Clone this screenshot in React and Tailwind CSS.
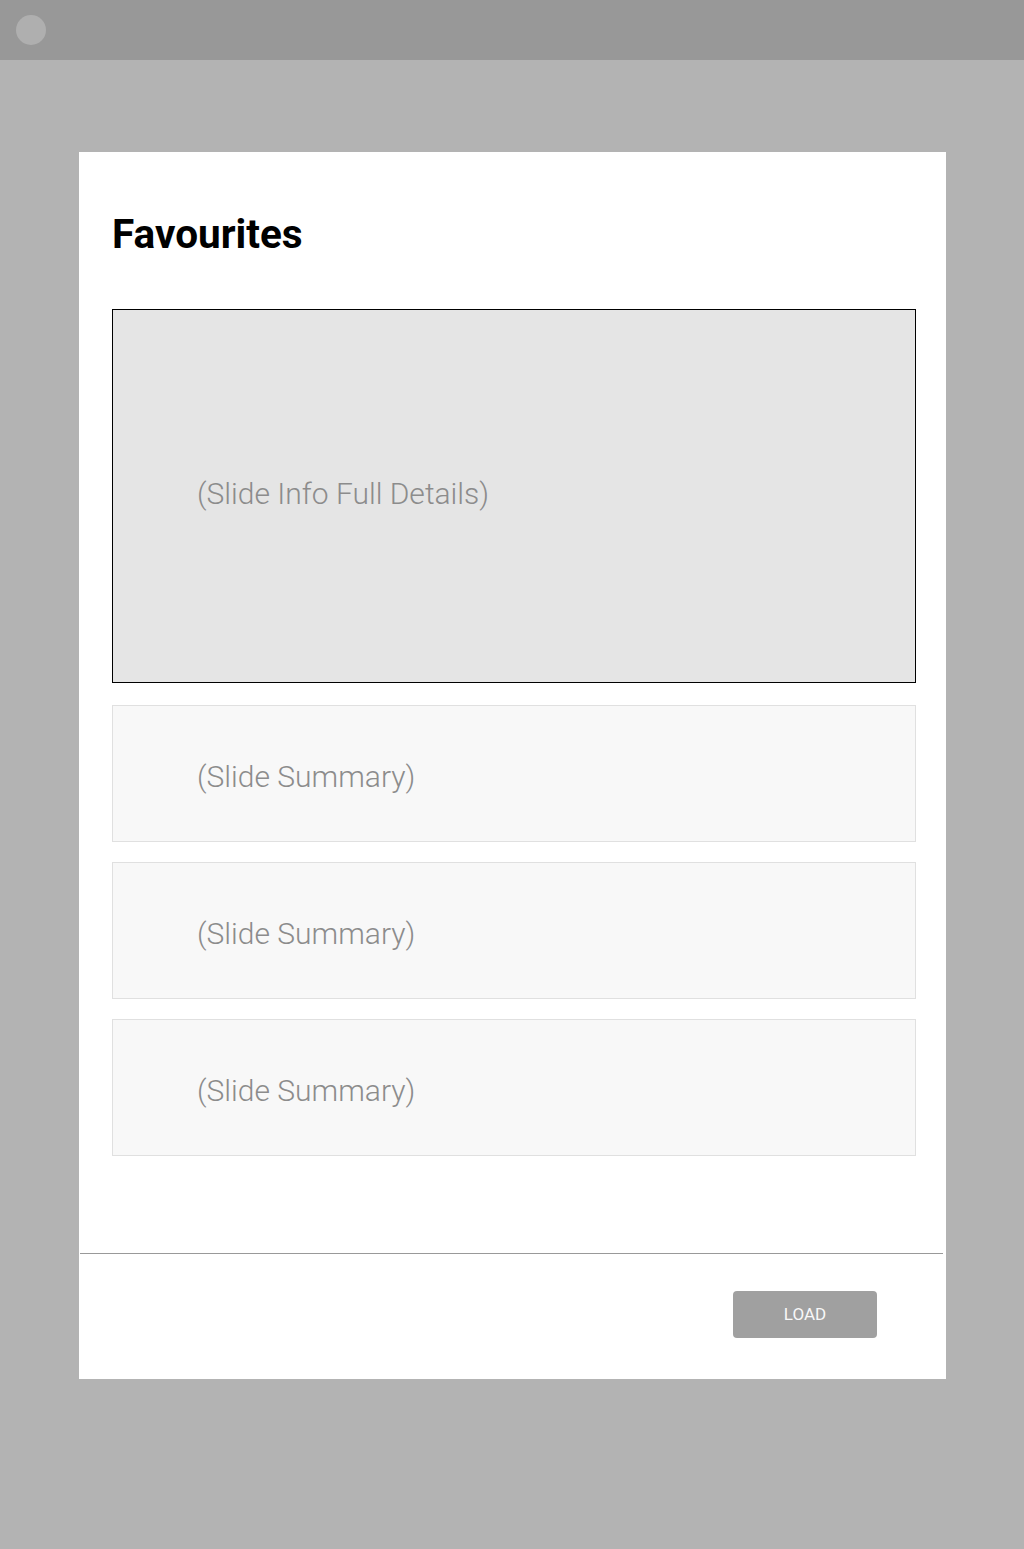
const summaries = ['(Slide Summary)', '(Slide Summary)', '(Slide Summary)'];

const App = () => {
  return (
    <div className="min-h-[1549px] bg-[#b3b3b3] font-['Roboto',sans-serif]">
      {/* Top bar */}
      <div className="h-[60px] bg-[#989898] flex items-center pl-4">
        <div className="w-[30px] h-[30px] rounded-full bg-[#afafaf]" />
      </div>

      {/* Modal */}
      <div className="ml-[79px] mt-[92px] w-[867px] h-[1227px] bg-white flex flex-col">
        <div className="pl-[33px] pr-[30px] pt-[58px]">
          <h1 className="text-[40.5px] leading-[48px] font-bold text-black">Favourites</h1>

          <div className="mt-[51px] h-[374px] border border-black bg-[#e5e5e5] flex items-center pl-[84px] pb-[6px]">
            <span className="text-[30px] font-light text-[#8c8c8c]">(Slide Info Full Details)</span>
          </div>

          <div className="mt-[22px] flex flex-col gap-[20px]">
            {summaries.map((s, i) => (
              <div key={i} className="h-[137px] border border-[#e0e0e0] bg-[#f8f8f8] flex items-center pl-[84px] pt-[6px]">
                <span className="text-[30px] font-light text-[#8c8c8c]">{s}</span>
              </div>
            ))}
          </div>
        </div>

        <div className="mt-[97px] ml-px mr-[3px] h-px bg-[#999999]" />

        <div className="flex justify-end pr-[69px] pt-[37px]">
          <button className="w-[144px] h-[47px] rounded-[4px] bg-[#a0a0a0] text-[#f8f8f8] text-[17px] font-normal">
            LOAD
          </button>
        </div>
      </div>
    </div>
  );
};

export default App;
